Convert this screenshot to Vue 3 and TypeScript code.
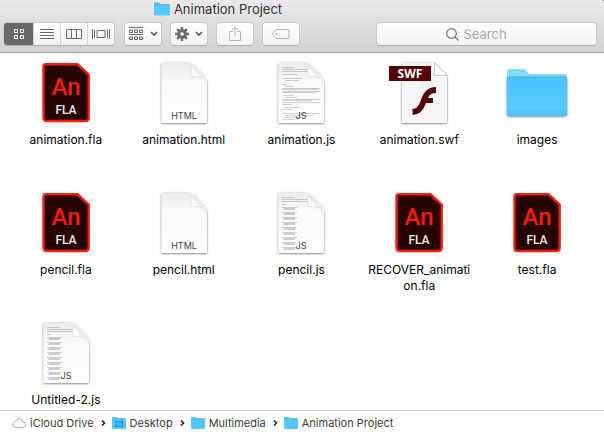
<script setup lang="ts">
import { ref } from 'vue'

type Kind = 'fla' | 'html' | 'js' | 'swf' | 'folder'
interface Entry {
  name: string
  kind: Kind
  dense?: boolean
}

const files: Entry[] = [
  { name: 'animation.fla', kind: 'fla' },
  { name: 'animation.html', kind: 'html' },
  { name: 'animation.js', kind: 'js', dense: true },
  { name: 'animation.swf', kind: 'swf' },
  { name: 'images', kind: 'folder' },
  { name: 'pencil.fla', kind: 'fla' },
  { name: 'pencil.html', kind: 'html' },
  { name: 'pencil.js', kind: 'js' },
  { name: 'RECOVER_animation.fla', kind: 'fla' },
  { name: 'test.fla', kind: 'fla' },
  { name: 'Untitled-2.js', kind: 'js' },
]

const path = ['iCloud Drive', 'Desktop', 'Multimedia', 'Animation Project']
const views = ['Icons', 'List', 'Columns', 'Cover Flow']
const activeView = ref('Icons')
const query = ref('')

// Faint code lines printed on the script document icon: [x, y, width]
const header = [[13, 6, 13], [13, 8, 26], [13, 10, 25], [13, 13, 4]]
const sparse = [...header]
for (let y = 16; y < 58; y += 5) {
  sparse.push([13, y, 15], [15, y + 1, 11], [14, y + 2, 12])
}
const dense = [
  ...header,
  [16, 13, 12], [14, 17, 19], [16, 19, 14], [14, 23, 4], [16, 25, 8],
  [13, 27, 38], [13, 28, 36], [13, 30, 38], [13, 31, 34], [14, 34, 10], [16, 36, 12],
  [13, 38, 38], [13, 39, 30], [13, 41, 38], [13, 43, 10], [15, 46, 16], [14, 48, 10],
  [13, 52, 38], [15, 54, 30], [14, 56, 18], [14, 58, 12],
]
</script>

<template>
  <div class="window">
    <svg class="defs" width="0" height="0" aria-hidden="true">
      <defs>
        <linearGradient id="folderFront" x1="0" y1="0" x2="0" y2="1">
          <stop offset="0" stop-color="#4bc3f8" />
          <stop offset="1" stop-color="#5acbfd" />
        </linearGradient>
        <linearGradient id="paper" x1="0" y1="0" x2="0" y2="1">
          <stop offset="0" stop-color="#ececec" />
          <stop offset="0.3" stop-color="#f9f9f9" />
          <stop offset="1" stop-color="#ffffff" />
        </linearGradient>
        <linearGradient id="curl" x1="0" y1="1" x2="1" y2="0">
          <stop offset="0" stop-color="#ffffff" />
          <stop offset="0.5" stop-color="#f4f4f4" />
          <stop offset="1" stop-color="#c8c8c8" />
        </linearGradient>
        <filter id="drop" x="-10%" y="-10%" width="120%" height="120%">
          <feDropShadow dx="0" dy="0.6" stdDeviation="0.8" flood-color="#000" flood-opacity="0.6" />
        </filter>
      </defs>
    </svg>

    <header class="top">
      <h1 class="title">
        <svg width="16" height="14" viewBox="0 0 16 14" aria-hidden="true">
          <path d="M0 1.5Q0 .5 1 .5H5L6.5 2H15Q16 2 16 3V13H0Z" fill="#5fb9e6" />
          <path d="M0 4H16V12.5Q16 13.5 15 13.5H1Q0 13.5 0 12.5Z" fill="#55c8fb" />
        </svg>
        <span>Animation Project</span>
      </h1>

      <div class="toolbar">
        <div class="segments" role="group" aria-label="View">
          <button
            v-for="v in views"
            :key="v"
            type="button"
            class="segment"
            :class="{ active: activeView === v }"
            :aria-label="v"
            :aria-pressed="activeView === v"
            @click="activeView = v"
          >
            <svg v-if="v === 'Icons'" width="12" height="12" viewBox="0 0 12 12">
              <path d="M1.5 1.5h3v3h-3zM7.5 1.5h3v3h-3zM1.5 7.5h3v3h-3zM7.5 7.5h3v3h-3z" />
            </svg>
            <svg v-else-if="v === 'List'" width="14" height="12" viewBox="0 0 14 12">
              <path d="M0 1.5h14M0 4.5h14M0 7.5h14M0 10.5h14" />
            </svg>
            <svg v-else-if="v === 'Columns'" width="16" height="12" viewBox="0 0 16 12">
              <path d="M.5 1.5h15v9h-15zM5.5 1.5v9M10.5 1.5v9" />
            </svg>
            <svg v-else width="18" height="12" viewBox="0 0 18 12">
              <path d="M.5 1v10M2.5 2v8M5 2.5h8v7H5zM15.5 2v8M17.5 1v10" />
            </svg>
          </button>
        </div>

        <button type="button" class="tool" aria-label="Arrange">
          <svg width="15" height="14" viewBox="0 0 15 14">
            <path d="M0 .5h14M0 7.5h14M.5 3h3v2.5h-3zM5.5 3h3v2.5h-3zM10.5 3h3v2.5h-3zM.5 10h3v2.5h-3zM5.5 10h3v2.5h-3zM10.5 10h3v2.5h-3z" />
          </svg>
          <svg width="8" height="6" viewBox="0 0 8 6"><path class="chev" d="M1 1l3 3 3-3" /></svg>
        </button>
        <button type="button" class="tool" aria-label="Action">
          <svg width="14" height="14" viewBox="0 0 14 14">
            <path class="teeth" d="M7 0v14M0 7h14M2.1 2.1l9.8 9.8M11.9 2.1l-9.8 9.8" />
            <circle class="hub" cx="7" cy="7" r="3.3" />
          </svg>
          <svg width="8" height="6" viewBox="0 0 8 6"><path class="chev" d="M1 1l3 3 3-3" /></svg>
        </button>
        <button type="button" class="tool dim" aria-label="Share">
          <svg width="12" height="16" viewBox="0 0 12 16">
            <path d="M4 5.5H.5v9h11v-9H8M6 10.5V1M3 4l3-3 3 3" />
          </svg>
        </button>
        <button type="button" class="tool dim" aria-label="Edit Tags">
          <svg width="18" height="12" viewBox="0 0 18 12">
            <path d="M5 1.5h11q1 0 1 1v7q0 1-1 1H5Q3.5 10.5 1 7.2Q.2 6 1 4.8Q3.5 1.5 5 1.5Z" />
            <circle cx="4.5" cy="6" r=".7" />
          </svg>
        </button>

        <label class="search">
          <svg width="13" height="13" viewBox="0 0 13 13" aria-hidden="true">
            <circle cx="5.5" cy="5.5" r="4.8" />
            <path d="M9 9l3.5 3.5" />
          </svg>
          <input v-model="query" type="text" placeholder="Search" aria-label="Search" />
        </label>
      </div>
    </header>

    <main class="grid">
      <figure v-for="f in files" :key="f.name" class="item">
        <svg v-if="f.kind === 'fla'" width="64" height="64" viewBox="0 0 64 64" aria-hidden="true">
          <path d="M12 3.3H43.5L54.7 13.5V56.5Q54.7 60 51.2 60H13Q9.5 60 9.5 56.5V6Q9.5 3.3 12 3.3Z" fill="#260500" stroke="#fb1c09" stroke-width="2.4" />
          <text x="32" y="34" class="an">An</text>
          <text x="32" y="53" class="fla">FLA</text>
        </svg>

        <svg v-else-if="f.kind === 'html' || f.kind === 'js'" width="64" height="64" viewBox="0 0 64 64" aria-hidden="true">
          <path d="M9.5 2H34Q39 2 42 5L51 14Q55 18 55 23V62H9.5Z" fill="url(#paper)" filter="url(#drop)" />
          <g v-if="f.kind === 'js'" class="code">
            <rect v-for="(l, i) in f.dense ? dense : sparse" :key="i" :x="l[0]" :y="l[1]" :width="l[2]" height="1" />
          </g>
          <path d="M33 2Q39 3 39 9V16Q47 14 55 23Q54 17 50 13L42 5Q38 2 33 2Z" fill="url(#curl)" />
          <path d="M39 5V16Q44 14 50 17Z" fill="#fff" stroke="#cccccc" stroke-width=".5" />
          <text x="32" y="58" class="ext">{{ f.kind.toUpperCase() }}</text>
        </svg>

        <svg v-else-if="f.kind === 'swf'" width="64" height="64" viewBox="0 0 64 64" aria-hidden="true">
          <path d="M15 2H47.5L60 14.5V62H15Z" fill="#f6f6f6" filter="url(#drop)" />
          <path d="M47.5 2V14.5H60Z" fill="#fff" stroke="#bdbdbd" stroke-width=".8" />
          <rect x="2" y="5" width="42" height="15" fill="#560008" />
          <text x="23" y="17" class="swf">SWF</text>
          <path d="M49 26V32Q43 32 41 37H46V42H39Q35 54 25.5 54V48Q31 48 34 39Q38 26 49 26Z" fill="#560008" />
        </svg>

        <svg v-else width="64" height="64" viewBox="0 0 64 64" aria-hidden="true">
          <path d="M2 11Q2 8 5 8H18Q20 8 21 9.5L24 13H59Q62 13 62 16V52H2Z" fill="#83d9fc" />
          <path d="M2 16H62V52.5Q62 55 59.5 55H4.5Q2 55 2 52.5Z" fill="url(#folderFront)" filter="url(#drop)" />
          <path d="M2 16.5H62M2 50H62M2 52H62M2 54H62" stroke="#40aee0" stroke-width=".6" />
        </svg>
        <figcaption>{{ f.name }}</figcaption>
      </figure>
    </main>

    <nav class="pathbar" aria-label="Path">
      <template v-for="(p, i) in path" :key="p">
        <svg v-if="i" class="sep" width="6" height="8" viewBox="0 0 6 8" aria-hidden="true">
          <path d="M2 1.5l2.5 2.5-2.5 2.5" />
        </svg>
        <a href="#" class="crumb">
          <svg v-if="i === 0" width="14" height="12" viewBox="0 0 14 12" aria-hidden="true">
            <path d="M3.5 10.5Q.5 10.5 .5 8Q.5 6 2.5 5.5Q2.8 3.5 4.5 3.8Q5.5 1 8 1.5Q10.5 2 10.8 5Q13.5 5.2 13.5 7.8Q13.5 10.5 10.5 10.5Z" fill="#f8fafc" stroke="#a2a9b2" />
          </svg>
          <svg v-else width="14" height="12" viewBox="0 0 14 12" aria-hidden="true">
            <path d="M0 1Q0 0 1 0H4.5L6 1H13Q14 1 14 2V11H0Z" fill="#60bce8" />
            <path d="M0 3H14V11Q14 12 13 12H1Q0 12 0 11Z" fill="#55c8fb" />
            <path v-if="i === 1" d="M3.5 4.5h7v5h-7z" fill="#45b6ea" stroke="#218fc4" />
          </svg>
          <span>{{ p }}</span>
        </a>
      </template>
    </nav>
  </div>
</template>

<style>
body {
  background: #555;
}
</style>

<style scoped>
.window {
  display: flex;
  flex-direction: column;
  min-height: 100vh;
  overflow: hidden;
  border-top-right-radius: 3px;
  background: #fff;
  color: #000;
  font-family: Inter, Roboto, 'Liberation Sans', sans-serif;
}
.defs {
  position: absolute;
}
.top {
  box-sizing: border-box;
  height: 53px;
  border-bottom: 1px solid #a39fa3;
  background: linear-gradient(#ebe9eb, #d3d1d3);
}
.title {
  display: flex;
  justify-content: center;
  align-items: center;
  gap: 4px;
  height: 18px;
  margin: 0 0 4px;
  padding-right: 168px;
  font-size: 13px;
  line-height: 18px;
  font-weight: 400;
  color: #363436;
}
.toolbar {
  display: flex;
  gap: 8px;
  padding: 0 7px 0 3px;
}
.segments,
.tool,
.search {
  box-sizing: border-box;
  height: 24px;
  border: 1px solid #cac8ca;
  border-bottom-color: #b0aeb0;
  border-radius: 4px;
  background: linear-gradient(#fff, #f3f3f3);
  overflow: hidden;
}
.segments {
  display: grid;
  grid-template-columns: 29px 27px 27px 27px;
  width: 112px;
}
.segment,
.tool {
  display: flex;
  align-items: center;
  justify-content: center;
  padding: 0;
  font: inherit;
}
.segment {
  border: 0;
  border-left: 1px solid #d4d2d4;
  background: none;
}
.segment.active {
  border-left: 0;
  background: #696869;
}
.tool {
  flex: none;
  gap: 6px;
  width: 38px;
}
.segments + .tool {
  margin-left: 1px;
}
.segment svg,
.tool svg {
  flex: none;
  fill: none;
  stroke: #69686a;
  stroke-width: 1;
}
.segment.active svg {
  stroke: #fff;
}
.tool .chev {
  stroke: #555;
  stroke-width: 1.6;
}
.tool .teeth {
  stroke-width: 2.4;
}
.tool .hub {
  stroke-width: 3;
  fill: #fafafa;
}
.tool.dim svg {
  stroke: #b6b5b6;
}
.search {
  display: flex;
  flex: 1;
  align-items: center;
  justify-content: center;
  gap: 5px;
  margin-left: 68px;
}
.search svg {
  flex: none;
  fill: none;
  stroke: #707070;
  stroke-width: 1.2;
}
.search input {
  width: 64px;
  padding: 0;
  border: 0;
  outline: 0;
  background: none;
  font: inherit;
  font-size: 13px;
  color: #333;
}
.search input::placeholder {
  color: #a9a8a9;
  opacity: 1;
}
.grid {
  display: grid;
  flex: 1;
  grid-template-columns: repeat(5, 1fr);
  grid-template-rows: 130px 130px;
  grid-auto-rows: auto;
  align-content: start;
  padding: 8px 8px 0 7px;
}
.item {
  display: flex;
  flex-direction: column;
  align-items: center;
  gap: 7px;
  min-width: 0;
  margin: 0;
}
.item svg {
  flex: none;
}
.item figcaption {
  max-width: 104px;
  font-size: 12px;
  line-height: 16px;
  text-align: center;
  overflow-wrap: anywhere;
}
.item text {
  text-anchor: middle;
}
.an {
  font: 500 24px Roboto, sans-serif;
  fill: #fb1c09;
}
.fla {
  font: 500 12px Roboto, sans-serif;
  fill: #f0eceb;
}
.swf {
  font: 700 12px 'Noto Sans', sans-serif;
  fill: #fff;
}
.ext {
  font: 400 9px Inter, sans-serif;
  fill: #3c3c3c;
}
.code {
  fill: #000;
  opacity: 0.18;
}
.pathbar {
  display: flex;
  align-items: center;
  gap: 6px;
  box-sizing: border-box;
  height: 22px;
  padding: 3px 12px 0;
  border-top: 1px solid #c4c4c4;
  background: #fff;
  font-size: 11px;
  line-height: 16px;
}
.crumb {
  display: flex;
  align-items: center;
  gap: 4px;
  color: #3c3c3c;
  text-decoration: none;
  white-space: nowrap;
}
.sep {
  fill: none;
  stroke: #222;
  stroke-width: 1.6;
}
</style>
